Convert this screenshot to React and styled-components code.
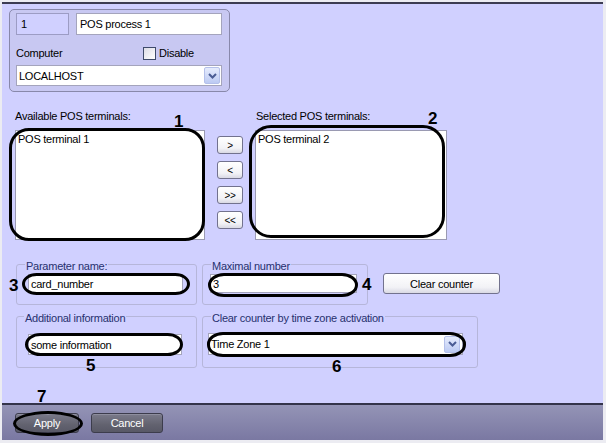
import React from 'react';
import styled, { createGlobalStyle } from 'styled-components';

const GlobalStyle = createGlobalStyle`
  html, body { margin: 0; padding: 0; background: #ececf2; }
  body {
    font-family: "Liberation Sans", Arial, sans-serif;
    font-size: 11px;
    letter-spacing: -0.25px;
    color: #000;
  }
  * { box-sizing: border-box; }
`;

const Window = styled.div`
  position: relative;
  width: 606px;
  height: 443px;
  padding: 2px 3px 3px 2px;
  background: #ececf2;
  display: flex;
  flex-direction: column;
  overflow: hidden;
`;

const Main = styled.div`
  flex: 1;
  background: #d0d0ff;
  border-top: 2px solid #3c3c52;
  padding: 5px 0 0 7px;
  display: flex;
  flex-direction: column;
  align-items: flex-start;
`;

const TopGroup = styled.div`
  width: 221px;
  height: 83px;
  border: 1px solid #8888aa;
  border-radius: 5px;
  background: #c8c8f2;
  padding: 3px 7px 5px 6px;
  display: flex;
  flex-direction: column;
`;

const Row = styled.div`
  display: flex;
  align-items: center;
  gap: ${p => p.$gap || 0}px;
  margin-top: ${p => p.$mt || 0}px;
  height: ${p => p.$h ? `${p.$h}px` : 'auto'};
`;

const Field = styled.div`
  position: relative;
  width: ${p => p.$w}px;
  height: ${p => p.$h}px;
  background: ${p => p.$tint ? '#d0d0ff' : '#ffffff'};
  border: 1px solid ${p => p.$tint ? '#9c9cc4' : '#a4a4bc'};
  padding-left: ${p => p.$pad ?? 2}px;
  margin: ${p => p.$m || '0'};
  display: flex;
  align-items: center;
  white-space: nowrap;
  flex: ${p => p.$grow ? 1 : 'none'};
`;

const DropButton = styled.span`
  margin-left: auto;
  margin-right: ${p => p.$mr ?? 1}px;
  width: 16px;
  height: 17px;
  border-radius: 2px;
  border: 1px solid #b4c0ea;
  background: linear-gradient(#e6ecfd, #bccaf3);
  display: flex;
  align-items: center;
  justify-content: center;
`;

const Chevron = () => (
  <svg width="9" height="6" viewBox="0 0 9 6">
    <path d="M1 1 L4.5 4.5 L8 1" fill="none" stroke="#4a5c94" strokeWidth="2" />
  </svg>
);

const Label = styled.span`
  line-height: 14px;
  width: ${p => p.$w ? `${p.$w}px` : 'auto'};
  white-space: nowrap;
`;

const CheckBox = styled.span`
  width: 13px;
  height: 13px;
  border: 1px solid #3e4a6a;
  background: linear-gradient(135deg, #dcdce6, #ffffff);
  margin-right: 3px;
`;

const ListsSection = styled.div`
  margin: 18px 0 0 6px;
  display: grid;
  grid-template-columns: 190px 26px 192px;
  grid-template-rows: 13px 110px;
  column-gap: 12px;
  row-gap: 7px;
`;

const SectionLabel = styled.span`
  line-height: 13px;
  white-space: nowrap;
  grid-column: ${p => p.$col};
  margin-left: ${p => p.$ml || 0}px;
`;

const Marked = styled.div`
  position: relative;
  display: flex;
  flex: none;
  margin: ${p => p.$m || '0'};
`;

const Ring = styled.span`
  position: absolute;
  top: ${p => p.$t}px;
  right: ${p => p.$r}px;
  bottom: ${p => p.$b}px;
  left: ${p => p.$l}px;
  border: 3px solid #000;
  border-radius: ${p => p.$rad};
  pointer-events: none;
`;

const ListBox = styled.div`
  width: ${p => p.$w}px;
  height: 110px;
  background: #fff;
  border: 1px solid #9a9ab2;
  padding: 2px 0 0 2px;
  line-height: 13px;
  white-space: nowrap;
`;

const ArrowColumn = styled.div`
  display: flex;
  flex-direction: column;
  gap: 7px;
  padding-top: 6px;
`;

const LightButton = styled.button`
  width: ${p => p.$w}px;
  height: ${p => p.$h}px;
  padding: 0;
  margin: ${p => p.$m || '0'};
  font-family: "Liberation Sans", Arial, sans-serif;
  font-size: ${p => p.$fs || 11}px;
  letter-spacing: ${p => p.$ls ?? -0.25}px;
  color: #000;
  border: 1px solid #72728e;
  border-radius: 3px;
  background: linear-gradient(#ffffff, #f2f2f6 70%, #d9d9e4);
  display: flex;
  align-items: center;
  justify-content: center;
  flex: none;
`;

const ParamRow = styled.div`
  display: flex;
  align-items: flex-start;
  margin: ${p => p.$mt}px 0 0 7px;
`;

const Group = styled.div`
  width: ${p => p.$w}px;
  height: ${p => p.$h}px;
  margin-left: ${p => p.$ml || 0}px;
  border: 1px solid #b6b6da;
  border-radius: 3px;
  display: flex;
  flex-direction: column;
  align-items: flex-start;
  flex: none;
`;

const Legend = styled.span`
  margin: -5px 0 0 ${p => p.$ml}px;
  padding: 0 1px;
  line-height: 13px;
  background: #d0d0ff;
  color: #27306e;
  white-space: nowrap;
`;

const Footer = styled.div`
  height: 37px;
  border-top: 2px solid #34344a;
  background: linear-gradient(#9494b6, #7a78a2);
  display: flex;
  align-items: flex-start;
  gap: 12px;
  padding: 8px 0 0 13px;
`;

const DarkButton = styled.button`
  width: ${p => p.$w}px;
  height: 20px;
  padding: 0;
  font-family: "Liberation Sans", Arial, sans-serif;
  font-size: 11px;
  letter-spacing: -0.25px;
  color: #fff;
  border: 1px solid #3c3c4c;
  border-radius: 3px;
  background: linear-gradient(#7a7a8a, #62626f 60%, #585866);
  box-shadow: inset 0 1px 0 #8e8e9e;
  display: flex;
  align-items: center;
  justify-content: center;
`;

const Callout = styled.span`
  position: absolute;
  left: ${p => p.$x}px;
  top: ${p => p.$y}px;
  font-family: "Liberation Sans", Arial, sans-serif;
  font-weight: bold;
  font-size: 17px;
  line-height: 17px;
  letter-spacing: 0;
  color: #000;
`;

const callouts = [
  { n: '1', x: 174, y: 113 },
  { n: '2', x: 428, y: 110 },
  { n: '3', x: 9, y: 277 },
  { n: '4', x: 362, y: 276 },
  { n: '5', x: 86, y: 357 },
  { n: '6', x: 332, y: 358 },
  { n: '7', x: 37, y: 388 },
];

export default function App() {
  return (
    <>
      <GlobalStyle />
      <Window>
        <Main>
          <TopGroup>
            <Row $gap={7}>
              <Field $w={53} $h={22} $tint $pad={4}>1</Field>
              <Field $h={22} $grow $pad={3}>POS process 1</Field>
            </Row>
            <Row $mt={11} $h={14}>
              <Label $w={127}>Computer</Label>
              <CheckBox />
              <Label>Disable</Label>
            </Row>
            <Row $mt={5}>
              <Field $w={206} $h={21} $pad={2}>
                LOCALHOST
                <DropButton><Chevron /></DropButton>
              </Field>
            </Row>
          </TopGroup>

          <ListsSection>
            <SectionLabel $col={1}>Available POS terminals:</SectionLabel>
            <SectionLabel $col={3} $ml={1}>Selected POS terminals:</SectionLabel>
            <Marked>
              <ListBox $w={190}>POS terminal 1</ListBox>
              <Ring $t={-2} $r={0} $b={-1} $l={-6} $rad="20px" />
            </Marked>
            <ArrowColumn>
              <LightButton $w={26} $h={18} $fs={10}>&gt;</LightButton>
              <LightButton $w={26} $h={18} $fs={10}>&lt;</LightButton>
              <LightButton $w={26} $h={18} $fs={10}>&gt;&gt;</LightButton>
              <LightButton $w={26} $h={18} $fs={10}>&lt;&lt;</LightButton>
            </ArrowColumn>
            <Marked>
              <ListBox $w={192}>POS terminal 2</ListBox>
              <Ring $t={-5} $r={2} $b={2} $l={-6} $rad="22px" />
            </Marked>
          </ListsSection>

          <ParamRow $mt={24}>
            <Group $w={181} $h={41}>
              <Legend $ml={8}>Parameter name:</Legend>
              <Marked $m="1px 0 0 11px">
                <Field $w={155} $h={19}>card_number</Field>
                <Ring $t={-1} $r={-7} $b={-2} $l={-6} $rad="16px / 12px" />
              </Marked>
            </Group>
            <Group $w={166} $h={41} $ml={5}>
              <Legend $ml={8}>Maximal number</Legend>
              <Marked $m="1px 0 0 7px">
                <Field $w={147} $h={19}>3</Field>
                <Ring $t={-1} $r={-1} $b={-4} $l={-2} $rad="16px / 12px" />
              </Marked>
            </Group>
            <LightButton $w={117} $h={21} $m="9px 0 0 15px">Clear counter</LightButton>
          </ParamRow>

          <ParamRow $mt={11}>
            <Group $w={181} $h={52}>
              <Legend $ml={7}>Additional information</Legend>
              <Marked $m="9px 0 0 11px">
                <Field $w={154} $h={21}>some information</Field>
                <Ring $t={-1} $r={-1} $b={-1} $l={-3} $rad="16px / 12px" />
              </Marked>
            </Group>
            <Group $w={276} $h={52} $ml={5}>
              <Legend $ml={8}>Clear counter by time zone activation</Legend>
              <Marked $m="8px 0 0 5px">
                <Field $w={255} $h={22}>
                  Time Zone 1
                  <DropButton $mr={2}><Chevron /></DropButton>
                </Field>
                <Ring $t={-1} $r={-3} $b={-2} $l={-1} $rad="16px / 12px" />
              </Marked>
            </Group>
          </ParamRow>
        </Main>

        <Footer>
          <Marked>
            <DarkButton $w={64}>Apply</DarkButton>
            <Ring $t={-2} $r={-4} $b={-3} $l={-2} $rad="50%" />
          </Marked>
          <DarkButton $w={72}>Cancel</DarkButton>
        </Footer>

        {callouts.map(c => (
          <Callout key={c.n} $x={c.x} $y={c.y}>{c.n}</Callout>
        ))}
      </Window>
    </>
  );
}
